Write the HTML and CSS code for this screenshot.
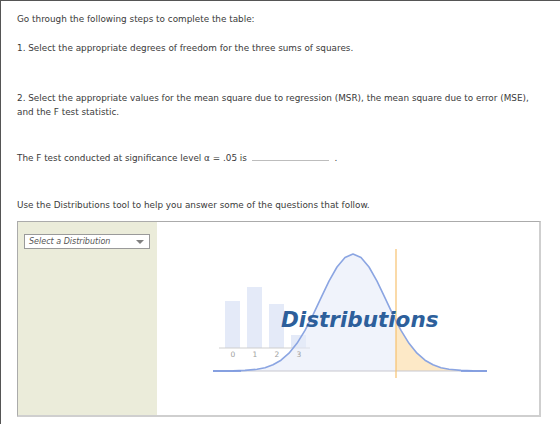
FILE: index.html
```html
<!DOCTYPE html>
<html>
<head>
<meta charset="utf-8">
<link rel="stylesheet" href="styles.css">
</head>
<body>
<div class="frame">
  <p class="p-intro">Go through the following steps to complete the table:</p>
  <p class="p-step1">1. Select the appropriate degrees of freedom for the three sums of squares.</p>
  <p class="p-step2">2. Select the appropriate values for the mean square due to regression (MSR), the mean square due to error (MSE), and the F test statistic.</p>
  <p class="p-ftest">The F test conducted at significance level α = .05 is <span class="blank"></span> <span class="dot">.</span></p>
  <p class="p-use">Use the Distributions tool to help you answer some of the questions that follow.</p>
  <div class="tool">
    <div class="side">
      <div class="select">
        <span class="select-text">Select a Distribution</span>
        <span class="select-arrow"></span>
      </div>
    </div>
    <div class="stage">
      <svg class="graphic" width="382" height="194" viewBox="156 222 382 194">
        <g fill="#e4eaf8">
          <rect x="224" y="301" width="15" height="47"/>
          <rect x="246" y="287" width="15" height="61"/>
          <rect x="268" y="304" width="15" height="44"/>
          <rect x="290" y="335" width="15" height="13"/>
        </g>
        <line x1="218" y1="348" x2="309" y2="348" stroke="#cfcfcf" stroke-width="1"/>
        <polygon fill="#e6ebf8" fill-opacity="0.6" points="212,371 232,370.85 244,370.4 256,369.3 264,367.7 272,364.8 280,360.2 288,353.2 296,343.3 304,330.4 312,314.9 320,297.9 328,281.2 336,267 344,257.4 352,254 360,257.4 368,267 376,281.2 384,297.9 392,314.9 395,321 395,371"/>
        <g class="ticks" fill="#a0a0a0">
          <text x="232" y="357">0</text>
          <text x="254" y="357">1</text>
          <text x="276" y="357">2</text>
          <text x="298" y="357">3</text>
        </g>
        <polygon fill="#fde9c7" points="395,371 395,321 400,330.4 408,343.3 416,353.2 424,360.2 432,364.8 440,367.7 448,369.3 460,370.4 472,370.85 486,371"/>
        <line x1="212" y1="371" x2="486" y2="371" stroke="#c8c8d0" stroke-width="1.2"/>
        <polyline fill="none" stroke="#8ba5e2" stroke-width="1.6" stroke-linejoin="round" points="212,371 232,370.85 244,370.4 256,369.3 264,367.7 272,364.8 280,360.2 288,353.2 296,343.3 304,330.4 312,314.9 320,297.9 328,281.2 336,267 344,257.4 352,254 360,257.4 368,267 376,281.2 384,297.9 392,314.9 395,321 400,330.4 408,343.3 416,353.2 424,360.2 432,364.8 440,367.7 448,369.3 460,370.4 472,370.85 486,371"/>
        <line x1="212" y1="371" x2="240" y2="371" stroke="#7f9be0" stroke-width="1.6"/>
        <line x1="460" y1="371" x2="486" y2="371" stroke="#7f9be0" stroke-width="1.6"/>
        <line x1="395" y1="249" x2="395" y2="378" stroke="#f7c16f" stroke-width="1.2"/>
        <text class="logo" x="280" y="327">Distributions</text>
      </svg>
    </div>
  </div>
</div>
</body>
</html>
```

FILE: styles.css
```css
html, body {
  margin: 0;
  padding: 0;
  background: #ffffff;
}

body {
  font-family: "DejaVu Sans", Verdana, sans-serif;
  font-size: 8.85px;
  line-height: 14px;
  color: #3a3a3a;
}

.frame {
  border-top: 1px solid #555555;
  border-left: 1px solid #555555;
  padding: 11px 0 0 16px;
  height: 440px;
  box-sizing: border-box;
}

p {
  margin: 0;
}

.p-step1 { margin-top: 15px; }
.p-step2 { margin-top: 36px; width: 530px; }
.p-ftest { margin-top: 32px; }
.p-use { margin-top: 33px; }

.blank {
  display: inline-block;
  width: 77px;
  height: 8px;
  border-bottom: 1px solid #bdbdbd;
  margin-left: 2px;
  vertical-align: baseline;
}

.dot {
  margin-left: 3px;
}

.tool {
  margin-top: 9px;
  width: 524px;
  height: 196px;
  box-sizing: border-box;
  border-top: 1px solid #ababab;
  border-left: 1px solid #ababab;
  border-right: 2px solid #cfcfcf;
  border-bottom: 2px solid #cfcfcf;
  display: flex;
}

.side {
  width: 139px;
  background: #ebecda;
  padding: 12px 0 0 6px;
  box-sizing: border-box;
}

.select {
  width: 126px;
  height: 15px;
  box-sizing: border-box;
  border: 1px solid #9a9a9a;
  background: #ffffff;
  display: flex;
  align-items: center;
  justify-content: space-between;
  padding: 0 5px 0 4px;
}

.select-text {
  font-style: italic;
  font-size: 8px;
  line-height: 12px;
  color: #555555;
}

.select-arrow {
  width: 0;
  height: 0;
  border-left: 4.5px solid transparent;
  border-right: 4.5px solid transparent;
  border-top: 4px solid #808080;
}

.stage {
  flex: 1;
  background: #ffffff;
}

.graphic {
  display: block;
}

.ticks text {
  font-family: "DejaVu Sans", sans-serif;
  font-size: 7.5px;
  text-anchor: middle;
}

.logo {
  font-family: "DejaVu Sans", sans-serif;
  font-weight: bold;
  font-style: italic;
  font-size: 21.5px;
  fill: #2d5f9b;
}
```
